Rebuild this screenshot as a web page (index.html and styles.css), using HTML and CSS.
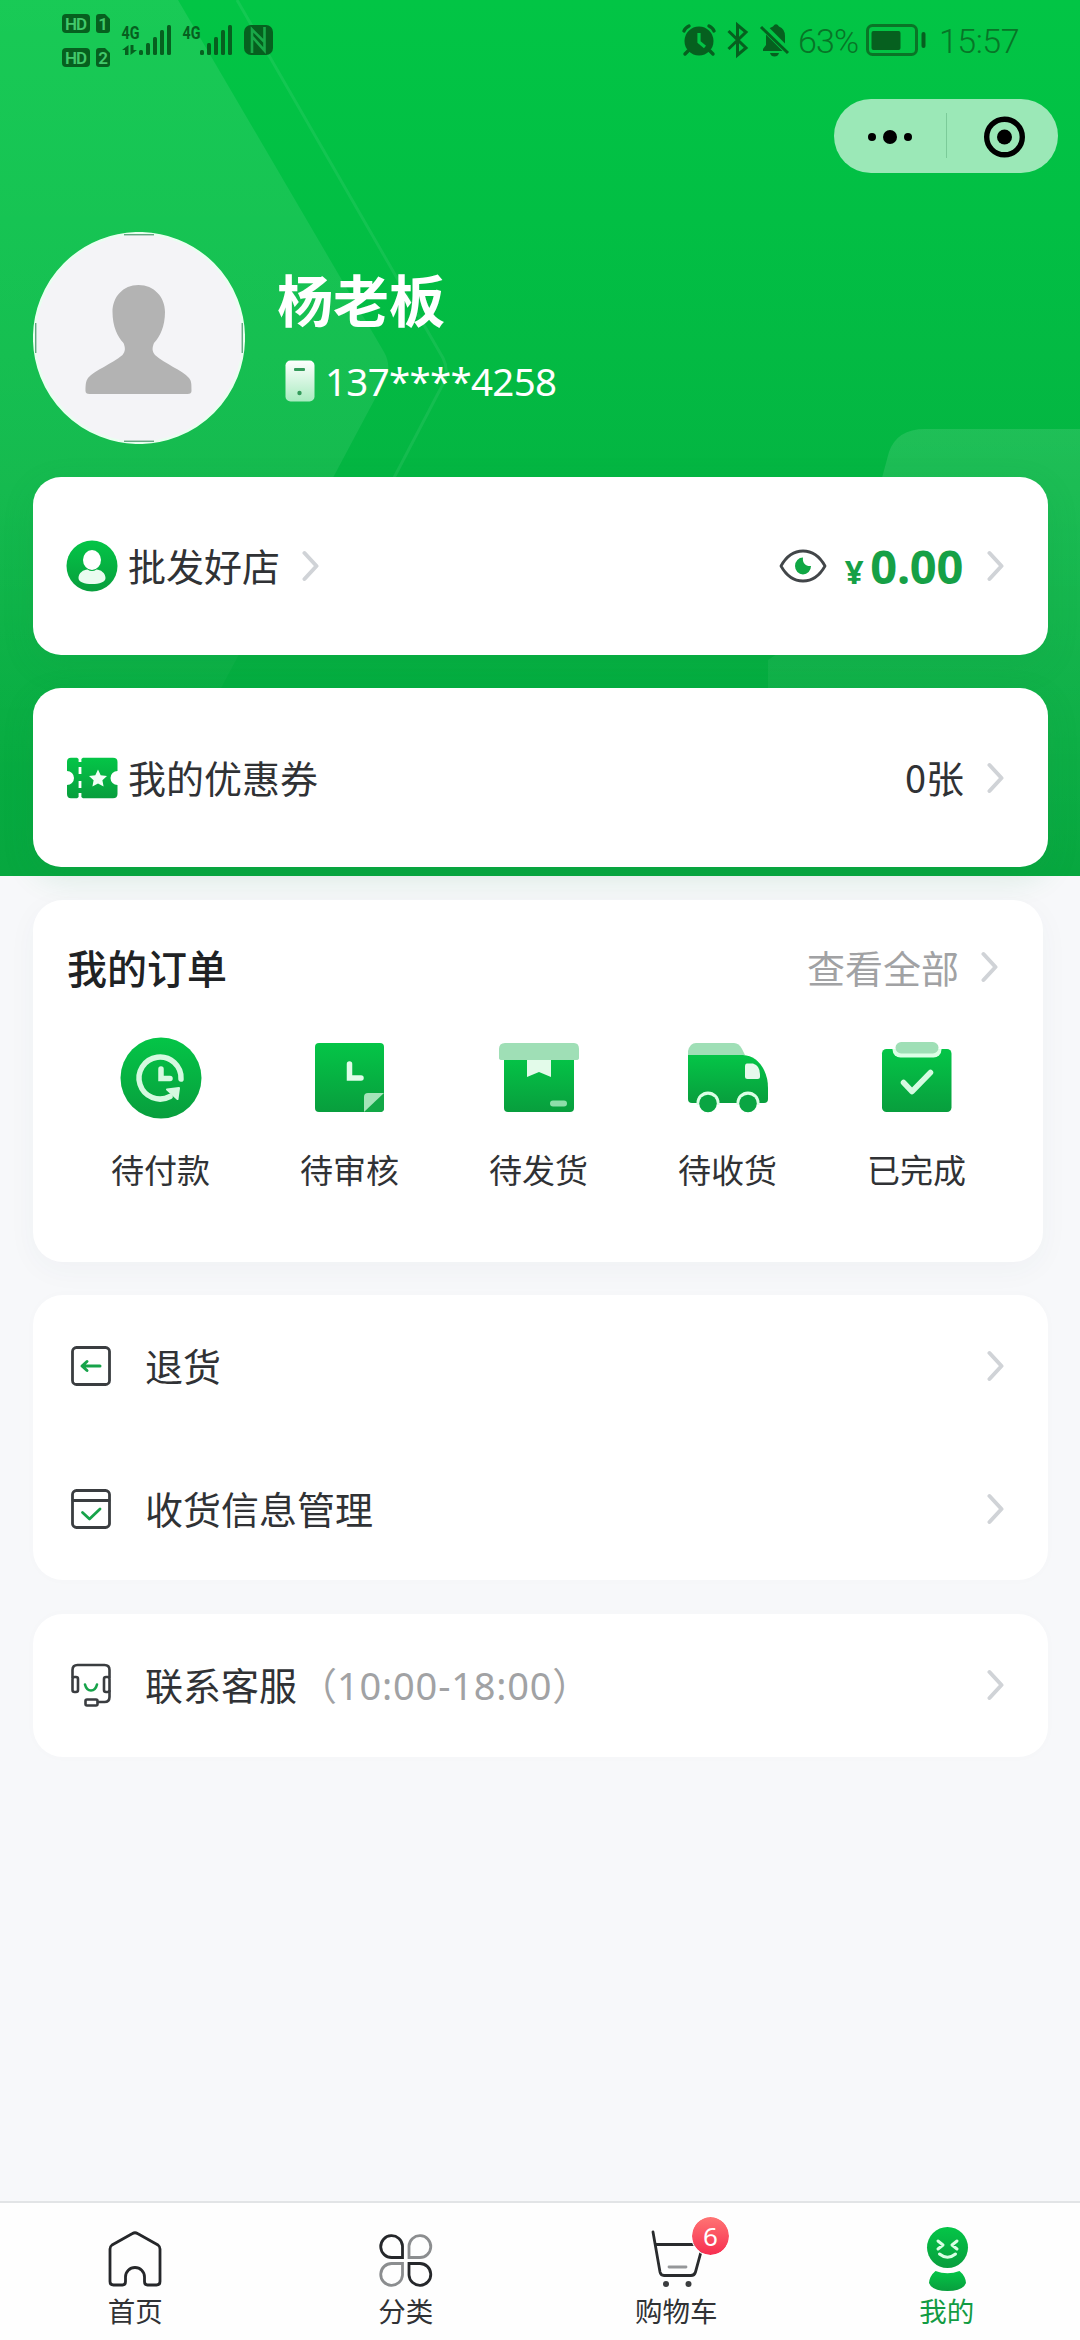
FILE: index.html
```html
<!DOCTYPE html>
<html lang="zh-CN">
<head>
<meta charset="utf-8">
<title>我的</title>
<link rel="stylesheet" href="styles.css">
</head>
<body>
<svg class="defs" width="0" height="0" aria-hidden="true">
  <defs>
    <linearGradient id="green" x1="0" y1="0" x2="0" y2="1"><stop offset="0" stop-color="#04c547"/><stop offset="1" stop-color="#089e3d"/></linearGradient>
    <linearGradient id="phone" x1="0" y1="0" x2="0" y2="1"><stop offset="0" stop-color="#ffffff"/><stop offset="1" stop-color="#a9ebc0"/></linearGradient>
    <symbol id="chevron" viewBox="0 0 18 32"><path d="M2.500 3 L14.500 16 L2.500 29" fill="none" stroke="#d0d3d7" stroke-width="4" stroke-linecap="round" stroke-linejoin="round"/></symbol>
  </defs>
</svg>
<div class="page">
  <section class="hero">
    <svg class="hero-bg" viewBox="0 0 1080 876" aria-hidden="true">
      <defs>
        <linearGradient id="heroFill" x1="0" y1="0" x2="0" y2="1"><stop offset="0" stop-color="#02c545"/><stop offset=".25" stop-color="#02bf44"/><stop offset="1" stop-color="#07a73f"/></linearGradient>
        <linearGradient id="band" x1="0" y1="0" x2="0" y2="1"><stop offset="0" stop-color="#fff" stop-opacity=".09"/><stop offset=".55" stop-color="#fff" stop-opacity=".07"/><stop offset=".9" stop-color="#fff" stop-opacity="0"/></linearGradient>
        <linearGradient id="glow" x1="0" y1="0" x2="0" y2="1"><stop offset="0" stop-color="#fff" stop-opacity=".11"/><stop offset="1" stop-color="#fff" stop-opacity="0"/></linearGradient>
      </defs>
      <rect width="1080" height="876" fill="url(#heroFill)"/>
      <path d="M0 0H178L384 352Q392 366 385 380L204 720L130 876H0Z" fill="url(#band)"/>
      <path d="M237 0L443 358Q449 370 444 382L385 495" fill="none" stroke="#fff" stroke-opacity=".07" stroke-width="3"/>
      <path d="M1080 429H925Q897 429 889 452L876 500L860 600L768 660V876H1080Z" fill="url(#glow)"/>
    </svg>

    <div class="statusbar">
      <svg width="216" height="60" viewBox="60 10 216 60" fill="#06601f">
        <rect x="62" y="14" width="28" height="19" rx="4"/><path d="M96 17q0-3 3-3h6l5 5v11q0 3-3 3h-8q-3 0-3-3z"/>
        <rect x="62" y="48" width="28" height="19" rx="4"/><path d="M96 51q0-3 3-3h6l5 5v11q0 3-3 3h-8q-3 0-3-3z"/>
        <g class="sim-text"><text x="76" y="29.6" textLength="22">HD</text><text x="76" y="63.6" textLength="22">HD</text><text x="103" y="29.6">1</text><text x="103" y="63.6">2</text></g>
        <g class="net-text"><text x="121.500" y="38.500" textLength="18" lengthAdjust="spacingAndGlyphs">4G</text><text x="182.500" y="38.500" textLength="18" lengthAdjust="spacingAndGlyphs">4G</text></g>
        <path d="M128.500 55H125v-5h-3l6.500-5zM130.500 45h3v5h3.500l-6.500 5z"/>
        <g id="bars"><rect x="139" y="50" width="4" height="5" rx="1.500"/><rect x="146" y="43" width="4" height="12" rx="1.500"/><rect x="153" y="37" width="4" height="18" rx="1.500"/><rect x="160" y="30" width="4" height="25" rx="1.500"/><rect x="167" y="25" width="4" height="30" rx="1.500"/></g>
        <use href="#bars" x="61"/>
        <rect x="244" y="25" width="29" height="30" rx="7"/>
        <path d="M252 53V29.500L264.500 42M264.500 27V50.500L252.500 37" fill="none" stroke="#19a848" stroke-width="2.600"/>
      </svg>
      <div class="status-right">
        <svg width="110" height="40" viewBox="680 20 110 40" fill="#06601f">
          <circle cx="699" cy="41" r="14.500"/><path d="M688 51l-3 3M710 51l3 3M684 31q1-3 5-5M714 31q-1-3-5-5" stroke="#06601f" stroke-width="3.400" fill="none" stroke-linecap="round"/><path d="M699 33v9l6 5" stroke="#02c345" stroke-width="3.200" fill="none"/>
          <path d="M728.500 31L746 48l-8.500 7V25l8.500 7-17.500 17" fill="none" stroke="#06601f" stroke-width="3"/>
          <path d="M763 51V49l3-4V36q0-7 7-9.500Q776 22 779 26.500q6 2.500 6 9.500v9l3 4v2zM770 53h9q-1 3.500-4.500 3.500T770 53z"/>
          <path d="M762.500 26L790 53.500" stroke="#02c345" stroke-width="7"/><path d="M761 27L788 53" stroke="#06601f" stroke-width="3"/>
        </svg>
        <span class="percent">63%</span>
        <svg class="battery" width="60" height="34" viewBox="866 23 60 34"><rect x="867.500" y="25.500" width="49" height="29" rx="5" fill="none" stroke="#0a7527" stroke-width="3"/><rect x="871.500" y="31" width="29" height="19" rx="2" fill="#06601f"/><rect x="921.500" y="32" width="4" height="16" rx="2" fill="#06601f"/></svg>
        <span class="clock">15:57</span>
      </div>
    </div>

    <div class="capsule">
      <svg width="224" height="74" viewBox="0 0 224 74"><circle cx="38" cy="38" r="4"/><circle cx="56" cy="38" r="7"/><circle cx="74" cy="38" r="4"/><path d="M112.500 14v45" stroke="#7bcb99" stroke-width="1"/><circle cx="170.500" cy="38" r="17.800" fill="none" stroke="#000" stroke-width="5.400"/><circle cx="170.500" cy="38" r="7.500"/></svg>
    </div>

    <div class="profile">
      <svg class="avatar" width="212" height="212" viewBox="0 0 212 212"><circle cx="106" cy="106" r="104.800" fill="#f4f4f7" stroke="#e9fff0" stroke-width="2.500"/><path d="M91 2.800h30M91 209.200h30M2.800 91v30M209.200 91v30" stroke="#298451" stroke-width="1"/><path d="M105.500 53C90 53 79.500 65 79.500 80c0 14 5 25 11 31 2 5 2 8-1 12C79 132 62 138 55 146c-2 3-2.500 6-2.500 13q0 3 4 3h98q4 0 4-3c0-7 0-10-2.500-13-7-8-24-14-34-23-3-4-3-7-1-12 6-6 11-17 11-31C132 65 121 53 105.500 53z" fill="#b3b3b3"/></svg>
      <div class="who">
        <div class="name">杨老板</div>
        <div class="phone"><svg width="30" height="42" viewBox="0 0 30 42"><rect x=".5" y=".5" width="29" height="41" rx="5" fill="url(#phone)"/><rect x="9" y="8" width="11" height="3" rx="1" fill="#349b5b"/><circle cx="14.500" cy="33" r="2.200" fill="#349b5b"/></svg><span>137****4258</span></div>
      </div>
    </div>

    <div class="card wallet">
      <svg width="52" height="52" viewBox="0 0 52 52"><circle cx="26" cy="26" r="25.500" fill="url(#green)"/><ellipse cx="26" cy="20" rx="9" ry="10" fill="#fff"/><path d="M12.500 38c0-5 5-8.500 9-8.500q4.500 3 9 0c4 0 9 3.500 9 8.500 0 4-6 6-13.500 6s-13.500-2-13.500-6z" fill="#eafcf0"/></svg>
      <span class="label">批发好店</span>
      <svg class="near" width="18" height="32"><use href="#chevron"/></svg>
      <span class="grow"></span>
      <svg class="eye" width="48" height="34" viewBox="0 0 48 34"><path d="M2 17C7 8 15 2 24 2s17 6 22 15C41 26 33 32 24 32S7 26 2 17z" fill="none" stroke="#424649" stroke-width="2.800" stroke-linejoin="round"/><path d="M24 8.500a8 8.500 0 1 0 8 8.500c-5 .5-9-3-8-8.500z" fill="#10a744"/></svg>
      <span class="money"><small>¥</small>0.00</span>
      <svg width="18" height="32"><use href="#chevron"/></svg>
    </div>

    <div class="card coupon">
      <svg width="52" height="42" viewBox="0 0 52 42"><path d="M5 .8h6l3 2 3-2h30q4.500 0 4.500 4.200v9a7 7 0 0 0 0 14v9q0 4.200-4.500 4.200H17l-3-2-3 2H5q-4 0-4-4.200v-9a7 7 0 0 0 0-14V5Q1 .8 5 .8z" fill="url(#green)"/><path d="M14 0v5M14 10v7M14 24v7M14 36v6" stroke="#fff" stroke-width="2.800"/><path d="M32 12.500l2.700 5.700 6.300.8-4.600 4.300 1.200 6.200-5.600-3-5.600 3 1.200-6.200L23 19l6.300-.8z" fill="#f2fff6"/></svg>
      <span class="label">我的优惠券</span>
      <span class="grow"></span>
      <span class="count">0张</span>
      <svg width="18" height="32"><use href="#chevron"/></svg>
    </div>
  </section>

  <main class="content">
    <section class="orders">
      <div class="orders-head"><h2>我的订单</h2><span class="all">查看全部</span><svg width="18" height="32"><use href="#chevron"/></svg></div>
      <div class="steps">
        <div class="step"><svg width="84" height="84" viewBox="0 0 84 84"><circle cx="42" cy="42" r="40.500" fill="url(#green)"/><path d="M62 43A21 21 0 1 0 51 60.500" fill="none" stroke="#d5f9e0" stroke-width="5.500" stroke-linecap="round"/><path d="M48 53.500l12-1.500-1.500 11z" fill="#d5f9e0" stroke="#d5f9e0" stroke-width="2" stroke-linejoin="round"/><path d="M42 33v9.500h9" fill="none" stroke="#d5f9e0" stroke-width="5.500" stroke-linecap="round"/></svg><span>待付款</span></div>
        <div class="step"><svg width="84" height="84" viewBox="0 0 84 84"><path d="M11 7h61q4 0 4 4v61q0 4-4 4H11q-4 0-4-4V11q0-4 4-4z" fill="url(#green)"/><path d="M76 57v15q0 4-4 4H56z" fill="#12a846"/><path d="M76 57H60q-4 0-4 4v15z" fill="#a4e4b9"/><path d="M41.500 28v14H53" fill="none" stroke="#e0fce9" stroke-width="5.500" stroke-linecap="round"/></svg><span>待审核</span></div>
        <div class="step"><svg width="84" height="84" viewBox="0 0 84 84"><path d="M7 20h70v52q0 4-4 4H11q-4 0-4-4z" fill="url(#green)"/><path d="M8 7h69q5 0 5 6v9q0 2-3 2H5q-3 0-3-2v-9q0-6 6-6z" fill="#9fdfb6"/><path d="M30 24h24v17l-12-5-12 5z" fill="#e3fbea"/><rect x="53" y="64.500" width="17" height="6" rx="3" fill="#8edeaa"/></svg><span>待发货</span></div>
        <div class="step"><svg width="84" height="84" viewBox="0 0 84 84"><path d="M10 7h38q5 0 8 6l3 6H2v-4q2-8 8-8z" fill="#9fdfb6"/><path d="M2 19h55q14 1 21 15 4 8 4 18v11q0 4-4 4H6q-4 0-4-4z" fill="url(#green)"/><path d="M61 27.500h6q7 2 7 11v2q0 2.500-2.500 2.500H61.500Q59 43 59 40.500v-10q0-3 2-3z" fill="#e5f9ec"/><circle cx="22" cy="67" r="11.500" fill="#dcffe6"/><circle cx="62" cy="67" r="11.500" fill="#dcffe6"/><path d="M8 69h68v10H8z" fill="#fff"/><circle cx="22" cy="67.500" r="8.800" fill="#0aa542"/><circle cx="62" cy="67.500" r="8.800" fill="#0aa542"/></svg><span>待收货</span></div>
        <div class="step"><svg width="84" height="84" viewBox="0 0 84 84"><rect x="7" y="13" width="69.500" height="63" rx="4.500" fill="url(#green)"/><rect x="17.500" y="4" width="49" height="17.500" rx="8" fill="#dcffe6"/><path d="M15 2h54v11H15z" fill="#fff"/><rect x="20.500" y="6" width="43" height="11.500" rx="5.700" fill="#9fdfb6"/><path d="M28.500 46.500l8.500 9 18.500-19" fill="none" stroke="#d5fbe1" stroke-width="5.500" stroke-linecap="round" stroke-linejoin="round"/></svg><span>已完成</span></div>
      </div>
    </section>

    <section class="menu">
      <div class="row"><svg width="44" height="44" viewBox="0 0 44 44" fill="none" stroke-linecap="round" stroke-linejoin="round"><rect x="3.500" y="3.500" width="37" height="37" rx="4" stroke="#3a3d40" stroke-width="2.800"/><path d="M31 22H14M18 17.500L13 22l5 4.500" stroke="#17a34a" stroke-width="3"/></svg><span class="label">退货</span><span class="grow"></span><svg width="18" height="32"><use href="#chevron"/></svg></div>
      <div class="row"><svg width="44" height="44" viewBox="0 0 44 44" fill="none" stroke-linecap="round" stroke-linejoin="round"><rect x="3.500" y="3.500" width="37" height="37" rx="4" stroke="#3a3d40" stroke-width="2.800"/><path d="M4 13.500h36" stroke="#3a3d40" stroke-width="2.800"/><path d="M13.500 25.500l7 6.500 10.500-10" stroke="#17a34a" stroke-width="2.800"/></svg><span class="label">收货信息管理</span><span class="grow"></span><svg width="18" height="32"><use href="#chevron"/></svg></div>
    </section>

    <section class="menu">
      <div class="row"><svg width="44" height="44" viewBox="0 0 44 44" fill="none" stroke="#3a3d40" stroke-width="2.600" stroke-linecap="round" stroke-linejoin="round"><path d="M3.500 14V7q0-5 5-5h27q5 0 5 5v7M40.500 28v6q0 5-5 5H29"/><rect x="3.500" y="14" width="5.500" height="15" rx="2"/><rect x="35" y="14" width="5.500" height="15" rx="2"/><rect x="16.500" y="36.500" width="12" height="6" rx="1.500"/><path d="M16 21.500q1.500 6 6 6t6-6" stroke="#17a34a"/></svg><span class="label">联系客服<span class="hours">（<span class="latin">10:00-18:00</span>）</span></span><span class="grow"></span><svg width="18" height="32"><use href="#chevron"/></svg></div>
    </section>
  </main>

  <nav class="tabs">
    <div class="tab"><svg width="60" height="66" viewBox="0 0 60 66" fill="none" stroke="#25272a" stroke-width="2.800" stroke-linejoin="round"><path d="M27.500 6.500q2.500-1.500 5 0L53 18q2 1.500 2 4v32.500q0 3.500-3.500 3.500H42.500q-3 0-3-3.500V50a9.500 9.500 0 0 0-19 0v4.500q0 3.500-3 3.500H8.500q-3.500 0-3.500-3.500V22q0-2.500 2-4z"/></svg><span>首页</span></div>
    <div class="tab"><svg width="60" height="66" viewBox="0 0 60 66" fill="none" stroke-width="2.800"><path d="M26.500 30.500H16A10.900 10.900 0 1 1 26.500 19z" stroke="#25272a"/><path d="M33 30.500H43.500A10.900 10.900 0 1 0 33 19z" stroke="#8b8d8f"/><path d="M26.500 36.500H16A10.900 10.900 0 1 0 26.500 48z" stroke="#8b8d8f"/><path d="M33 36.500H43.500A10.900 10.900 0 1 1 33 48z" stroke="#25272a"/></svg><span>分类</span></div>
    <div class="tab"><svg width="60" height="66" viewBox="0 0 60 66" fill="none" stroke="#292b2d" stroke-width="2.800" stroke-linecap="round" stroke-linejoin="round"><path d="M7 5L14 45q.7 3.500 4 3.500H45q3.500 0 4.500-3.500L57 17.500H10"/><path d="M23 40h17" stroke="#959799"/><g fill="#3b3d3f" stroke="none"><circle cx="20" cy="57" r="3"/><circle cx="42.500" cy="57" r="3"/></g></svg><b class="badge">6</b><span>购物车</span></div>
    <div class="tab active"><svg width="60" height="66" viewBox="0 0 60 66"><circle cx="30.500" cy="20.500" r="20.500" fill="url(#green)"/><path d="M18.500 44q12 4.500 24 0 6 5 6.500 12-3 8-18.500 8T12 56q.5-7 6.500-12z" fill="url(#green)"/><path d="M21 14l5 4-5 4M40 14l-5 4 5 4M22.500 27q8 6.500 16 0" fill="none" stroke="#d9ffe4" stroke-width="3" stroke-linecap="round" stroke-linejoin="round"/></svg><span>我的</span></div>
  </nav>
</div>
</body>
</html>
```
FILE: styles.css
```css
* { box-sizing: border-box; }
body { margin: 0; background: #f7f8fa; font-family: "Noto Sans CJK SC", sans-serif; color: #303235; }
svg { display: block; flex: none; }
.defs { position: absolute; }
.page { width: 1080px; height: 2340px; display: flex; flex-direction: column; overflow: hidden; }
.grow { flex: 1; }

.hero { position: relative; height: 876px; padding: 0 32px 0 33px; display: flex; flex-direction: column; }
.hero-bg { position: absolute; inset: 0; width: 1080px; height: 876px; }
.statusbar, .capsule, .profile, .card { position: relative; }
.statusbar { height: 99px; padding: 10px 0 0 27px; display: flex; justify-content: space-between; align-items: flex-start; }
.status-right { display: flex; width: 368px; padding-top: 10px; color: #087527; font: 300 34px/42px Roboto, sans-serif; }
.percent { width: 76px; padding-left: 8px; white-space: nowrap; letter-spacing: -.8px; }
.battery { margin-top: 3px; }
.clock { margin-left: 13px; letter-spacing: -.5px; }
.sim-text { fill: #42c96b; font: 600 17px Roboto, sans-serif; text-anchor: middle; }
.net-text { font: 700 18.500px Roboto, sans-serif; }

.capsule { align-self: flex-end; margin-right: -10px; width: 224px; height: 74px; border-radius: 37px; background: #9be8b7; }
.profile { margin-top: 59px; height: 212px; display: flex; }
.who { padding: 25px 0 0 32px; color: #fff; }
.name { font-size: 56px; line-height: 82px; font-weight: 700; }
.phone { display: flex; align-items: center; gap: 10px; margin: 21px 0 0 8px; height: 42px; font: 400 38.500px/42px "Noto Sans", sans-serif; letter-spacing: -.7px; }

.card { display: flex; align-items: center; width: 1015px; background: #fff; border-radius: 28px; padding: 0 43px 0 33px; box-shadow: 0 10px 32px rgba(20, 150, 70, .14); }
.wallet { height: 178px; margin-top: 33px; }
.coupon { height: 179px; margin-top: 33px; }
.label { font-size: 38px; line-height: 56px; padding-bottom: 2px; }
.card .label { margin-left: 10px; }
.near { margin-left: 22px; }
.eye { margin-right: 18px; }
.money { color: #16a046; font: 700 47px/56px "Noto Sans", sans-serif; margin-right: 24px; padding-top: 5px; letter-spacing: -.3px; }
.money small { font-size: 33px; margin-right: 7px; }
.count { font-size: 38px; line-height: 56px; margin-right: 23px; padding-bottom: 2px; }

.content { padding: 24px 32px 0 33px; }
.orders { position: relative; width: 1010px; height: 362px; padding: 0 33px; background: #fff; border-radius: 30px; box-shadow: 0 8px 30px rgba(60, 70, 90, .04); }
.orders-head { display: flex; align-items: center; height: 136px; padding: 0 11px 3px 1px; }
h2 { flex: 1; margin: 0; font-size: 40px; line-height: 60px; font-weight: 500; color: #202224; }
.all { color: #a1a2a4; font-size: 38px; line-height: 56px; margin-right: 22px; }
.steps { display: grid; grid-template-columns: repeat(5, 189px); }
.step { display: flex; flex-direction: column; align-items: center; font-size: 33px; line-height: 50px; }
.step span { margin-top: 24px; }

.menu { margin-top: 33px; background: #fff; border-radius: 30px; padding: 0 43px 0 36px; box-shadow: 0 0 12px rgba(60, 70, 90, .015); }
.menu + .menu { margin-top: 34px; }
.row { display: flex; align-items: center; height: 142.500px; }
.row .label { margin-left: 32px; }
.hours { color: #a1a2a4; margin-left: 2px; }
.latin { font-family: "Noto Sans", sans-serif; letter-spacing: .8px; }

.tabs { margin-top: auto; height: 139px; border-top: 2px solid #e2e4e6; background: #fefefe; display: grid; grid-template-columns: repeat(4, 270.500px); }
.tab { position: relative; display: flex; flex-direction: column; align-items: center; padding-top: 24px; font-size: 27.500px; line-height: 40px; }
.tab > span { margin-top: -3px; }
.active { color: #129b43; }
.badge { position: absolute; left: 151px; top: 14px; width: 37px; height: 38px; border-radius: 50%; background: linear-gradient(#ff7473, #f72e50); outline: 1px solid #fff; color: #fff; font: 400 26px/39px "Noto Sans", sans-serif; text-align: center; }
```
